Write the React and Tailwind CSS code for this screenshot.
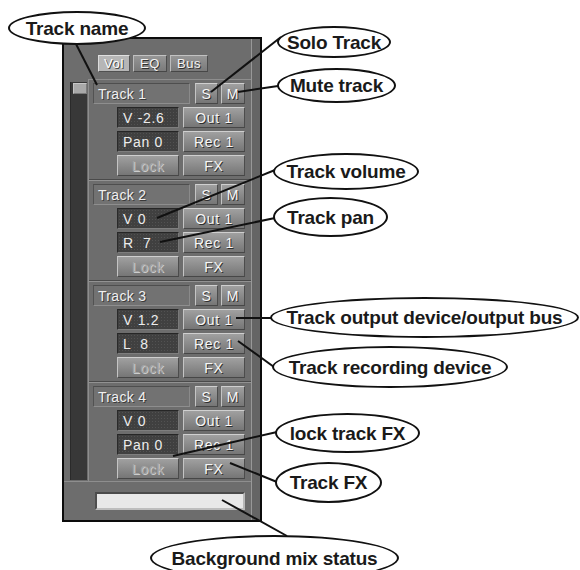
import React from "react";

const btnBase =
  "h-[21px] flex items-center justify-center bg-gradient-to-b from-[#a0a0a0] to-[#767676] border border-t-[#cfcfcf] border-l-[#c4c4c4] border-b-[#474747] border-r-[#4c4c4c] text-[14px] tracking-[0.7px] leading-none whitespace-pre";
const btnText = "text-[#f6f6f6] [text-shadow:1px_1px_0_#2e2e2e]";

function Btn({ children, className = "", disabled = false }) {
  return (
    <div className={`${btnBase} ${className}`}>
      <span className={disabled ? "text-[#a4a4a4] [text-shadow:1px_1px_0_#cdcdcd]" : btnText}>{children}</span>
    </div>
  );
}

function ValueBox({ children }) {
  return (
    <div className="w-[62px] h-[21px] flex items-center pl-[5px] bg-[#404040] bg-[radial-gradient(#525252_0.8px,transparent_0.9px)] bg-[length:3px_3px] border border-t-[#262626] border-l-[#2a2a2a] border-b-[#7e7e7e] border-r-[#7a7a7a] text-[14px] tracking-[0.7px] leading-none text-[#ececec] whitespace-pre">
      {children}
    </div>
  );
}

function Track({ name, vol, pan, last }) {
  return (
    <div className={last ? "pt-[3px] pb-[2px]" : ""}>
      <div className={last ? "flex flex-col gap-[3px]" : "flex flex-col gap-[3px] pt-[3px] pb-[3px]"}>
        <div className="flex items-center pl-[4px]">
          <div className="w-[97px] h-[21px] flex items-center pl-[4px] bg-[#727272] border border-t-[#4e4e4e] border-l-[#525252] border-b-[#8e8e8e] border-r-[#8a8a8a] text-[14px] tracking-[0.3px] leading-none text-[#f0f0f0] [text-shadow:1px_1px_0_#3a3a3a]">
            {name}
          </div>
          <Btn className="w-[23px] ml-[5px]">S</Btn>
          <Btn className="w-[24px] ml-[3px]">M</Btn>
        </div>
        <div className="flex items-center gap-[4px] pl-[28px]">
          <ValueBox>{vol}</ValueBox>
          <Btn className="w-[62px]">Out 1</Btn>
        </div>
        <div className="flex items-center gap-[4px] pl-[28px]">
          <ValueBox>{pan}</ValueBox>
          <Btn className="w-[62px]">Rec 1</Btn>
        </div>
        <div className="flex items-center gap-[4px] pl-[28px]">
          <Btn className="w-[62px]" disabled>Lock</Btn>
          <Btn className="w-[62px]">FX</Btn>
        </div>
      </div>
      {!last && <div className="h-[2px] border-t border-t-[#4a4a4a] border-b border-b-[#929292]" />}
    </div>
  );
}

function Callout({ text, className }) {
  return (
    <div
      className={`absolute flex items-center justify-center rounded-[50%] border-2 border-[#111] bg-white text-[19px] font-bold tracking-[-0.2px] text-[#1a1a1a] leading-none whitespace-nowrap ${className}`}
    >
      {text}
    </div>
  );
}

export default function App() {
  const lines = [
    [76, 44, 97, 85],
    [281, 37, 211, 92],
    [278, 86, 238, 92],
    [275, 170, 157, 218],
    [275, 218, 160, 242],
    [271, 318, 236, 318],
    [238, 341, 274, 367],
    [173, 456, 277, 432],
    [230, 463, 277, 482],
    [222, 500, 287, 536],
  ];
  return (
    <div className="relative w-[580px] h-[570px] overflow-hidden bg-white pl-[62px] pt-[37px] font-['Liberation_Sans',Arial,sans-serif]">
      {/* Panel */}
      <div className="w-[200px] h-[485px] border-2 border-[#0c0c0c] bg-[#6d6d6d] flex">
        <div className="w-[187px] flex flex-col">
          {/* Tabs */}
          <div className="flex gap-[3px] pl-[34px] pt-[16px]">
            <div className="w-[32px] h-[17px] flex items-center justify-center bg-[#b6b6b6] border border-t-[#e0e0e0] border-l-[#dcdcdc] border-b-[#505050] border-r-[#555] text-[13px] tracking-[0.6px] leading-none text-white [text-shadow:1px_1px_0_#444]">
              Vol
            </div>
            <div className="w-[34px] h-[17px] flex items-center justify-center bg-gradient-to-b from-[#969696] to-[#7a7a7a] border border-t-[#c2c2c2] border-l-[#bcbcbc] border-b-[#474747] border-r-[#4c4c4c] text-[13px] tracking-[0.6px] leading-none text-[#f4f4f4] [text-shadow:1px_1px_0_#2e2e2e]">
              EQ
            </div>
            <div className="w-[38px] h-[17px] flex items-center justify-center bg-gradient-to-b from-[#969696] to-[#7a7a7a] border border-t-[#c2c2c2] border-l-[#bcbcbc] border-b-[#474747] border-r-[#4c4c4c] text-[13px] tracking-[0.6px] leading-none text-[#f4f4f4] [text-shadow:1px_1px_0_#2e2e2e]">
              Bus
            </div>
          </div>
          {/* Middle */}
          <div className="mt-[7px] h-[402px] flex">
            <div className="w-[24px] pl-[6px] pt-[3px]">
              <div className="w-[17px] h-[398px] bg-[#383838] border-l border-l-[#2a2a2a] flex flex-col items-end pt-[1px]">
                <div className="w-[14px] h-[11px] bg-[#a9a9a9] border border-t-[#c8c8c8] border-l-[#c4c4c4] border-b-[#7a7a7a] border-r-[#7a7a7a]" />
              </div>
            </div>
            <div className="flex-1 border-l border-t border-[#8e8e8e]">
              <Track name="Track 1" vol="V -2.6" pan="Pan 0" />
              <Track name="Track 2" vol="V 0" pan="R  7" />
              <Track name="Track 3" vol="V 1.2" pan="L  8" />
              <Track name="Track 4" vol="V 0" pan="Pan 0" last />
            </div>
          </div>
          {/* Bottom */}
          <div className="flex-1 border-t border-[#8e8e8e] pl-[31px] pt-[10px]">
            <div className="w-[150px] h-[18px] bg-[#e8e8e8] border-2 border-t-[#4a4a4a] border-l-[#4e4e4e] border-b-[#bdbdbd] border-r-[#b8b8b8]" />
          </div>
        </div>
        <div className="w-[1px] bg-[#989898]" />
        <div className="flex-1 bg-[#656565]" />
      </div>

      {/* Leader lines */}
      <svg className="absolute left-0 top-0 pointer-events-none" width="580" height="570">
        {lines.map(([x1, y1, x2, y2], i) => (
          <line key={i} x1={x1} y1={y1} x2={x2} y2={y2} stroke="#111" strokeWidth="2" />
        ))}
      </svg>

      {/* Callouts */}
      <Callout text="Track name" className="left-[8px] top-[11px] w-[138px] h-[34px]" />
      <Callout text="Solo Track" className="left-[277px] top-[26px] w-[114px] h-[32px]" />
      <Callout text="Mute track" className="left-[277px] top-[68px] w-[119px] h-[35px]" />
      <Callout text="Track volume" className="left-[273px] top-[153px] w-[146px] h-[37px]" />
      <Callout text="Track pan" className="left-[273px] top-[197px] w-[115px] h-[40px]" />
      <Callout text="Track output device/output bus" className="left-[270px] top-[297px] w-[309px] h-[41px]" />
      <Callout text="Track recording device" className="left-[272px] top-[346px] w-[236px] h-[42px]" />
      <Callout text="lock track FX" className="left-[275px] top-[413px] w-[145px] h-[40px]" />
      <Callout text="Track FX" className="left-[275px] top-[462px] w-[107px] h-[41px]" />
      <Callout text="Background mix status" className="left-[150px] top-[535px] w-[249px] h-[46px]" />
    </div>
  );
}
